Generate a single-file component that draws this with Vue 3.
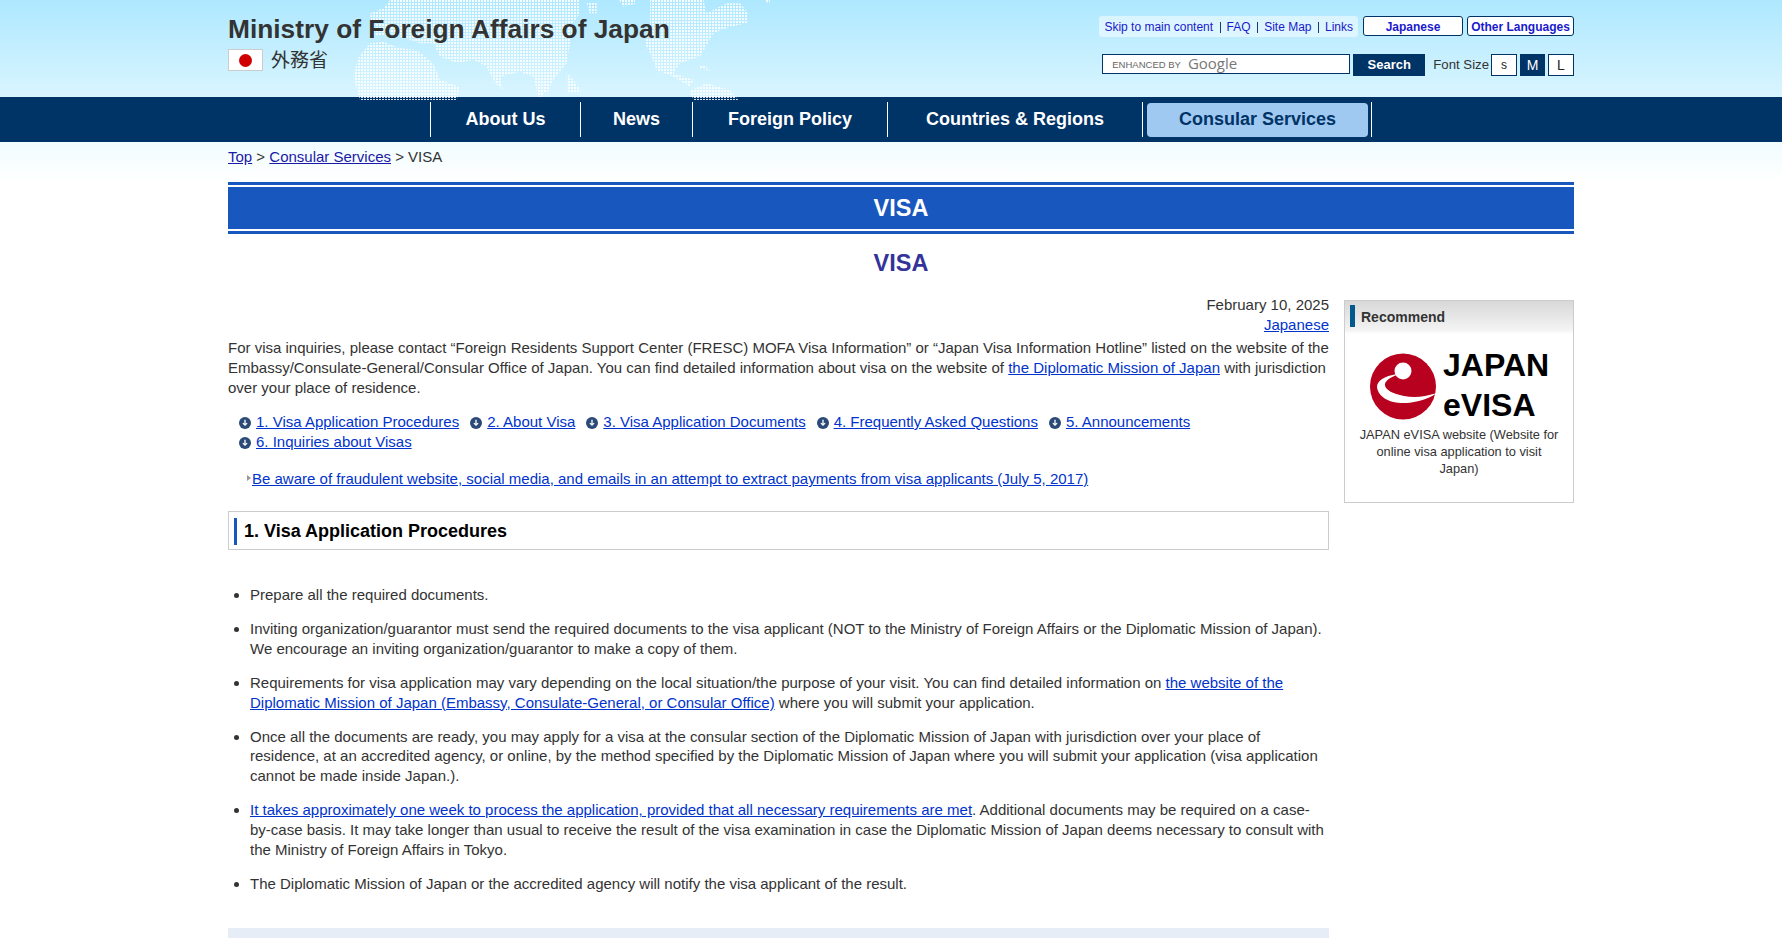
<script setup>
const utilLinks = ['FAQ', 'Site Map', 'Links']
const navItems = ['About Us', 'News', 'Foreign Policy', 'Countries & Regions', 'Consular Services']
const anchors = [
  '1. Visa Application Procedures',
  '2. About Visa',
  '3. Visa Application Documents',
  '4. Frequently Asked Questions',
  '5. Announcements',
  '6. Inquiries about Visas',
]

// rough outlines of the dotted world map, in 3x crop units
const landmasses = [
  '50,190 60,165 90,130 130,125 180,145 230,150 280,190 300,240 360,260 350,300 60,300 40,230',
  '90,40 130,25 150,0 720,0 720,40 700,70 690,130 680,190 640,240 620,280 590,270 580,230 540,215 480,230 490,270 465,250 440,200 400,180 350,190 300,170 280,130 240,130 150,100 100,110',
  '930,0 1090,0 1100,40 1160,10 1200,10 1225,40 1220,70 1170,80 1120,100 1080,170 1020,190 1000,220 1060,240 1050,260 1000,230 950,210 930,160 915,130 930,70',
  '1050,272 1100,250 1170,270 1195,300 1060,300',
  '740,8 770,8 770,40 748,40',
  '838,0 885,0 885,12 850,20',
  '680,220 700,240 722,270 720,280 680,280',
  '590,268 612,268 612,290 592,290',
  '1075,195 1095,195 1110,212 1080,205',
  '1275,0 1290,0 1290,10 1275,10',
]
</script>

<template>
  <div class="page">
    <header class="site-header">
      <svg class="world-map" width="440" height="100" viewBox="0 0 1320 300" aria-hidden="true">
        <defs>
          <pattern id="map-dots" width="9" height="9" patternUnits="userSpaceOnUse">
            <rect width="6" height="6" fill="#fff" />
          </pattern>
          <clipPath id="map-land">
            <polygon v-for="(land, i) in landmasses" :key="i" :points="land" />
          </clipPath>
        </defs>
        <rect width="1320" height="300" fill="url(#map-dots)" clip-path="url(#map-land)" opacity="0.85" />
      </svg>

      <div class="header-inner">
        <div class="brand">
          <div class="brand-name">Ministry of Foreign Affairs of Japan</div>
          <div class="brand-jp">
            <span class="flag"><i /></span>
            <span class="kanji">外務省</span>
          </div>
        </div>

        <div class="tools">
          <div class="tools-row">
            <div class="util">
              <a>Skip to main content</a>
              <a v-for="link in utilLinks" :key="link" class="util-sep">{{ link }}</a>
            </div>
            <a class="lang lang-jp">Japanese</a>
            <a class="lang lang-other">Other Languages</a>
          </div>
          <div class="tools-row search-row">
            <div class="search-box">
              <span class="enhanced">ENHANCED BY</span>
              <span class="google">Google</span>
            </div>
            <button class="search-btn">Search</button>
            <span class="font-label">Font Size</span>
            <span class="size size-s">s</span>
            <span class="size size-on">M</span>
            <span class="size">L</span>
          </div>
        </div>
      </div>
    </header>

    <nav class="main-nav">
      <ul>
        <li v-for="item in navItems" :key="item" :class="{ active: item === 'Consular Services' }">
          <a>{{ item }}</a>
        </li>
      </ul>
    </nav>

    <div class="crumb-wrap">
      <div class="crumbs">
        <a>Top</a> &gt; <a>Consular Services</a> &gt; VISA
      </div>
    </div>

    <div class="content">
      <div class="band"><div class="band-inner">VISA</div></div>
      <h1 class="title">VISA</h1>

      <div class="columns">
        <main class="main-col">
          <div class="date">February 10, 2025</div>
          <div class="date"><a>Japanese</a></div>
          <p class="intro">
            For visa inquiries, please contact “Foreign Residents Support Center (FRESC) MOFA Visa Information” or “Japan Visa Information Hotline” listed on the website of the Embassy/Consulate-General/Consular Office of Japan. You can find detailed information about visa on the website of <a>the Diplomatic Mission of Japan</a> with jurisdiction over your place of residence.
          </p>

          <ul class="anchors">
            <li v-for="a in anchors" :key="a">
              <svg width="12" height="12" viewBox="0 0 12 12" aria-hidden="true">
                <circle cx="6" cy="6" r="6" fill="#2b4a78" />
                <path d="M6 2.8v5.4M3.9 6.1 6 8.2l2.1-2.1" fill="none" stroke="#fff" stroke-width="1.3" />
              </svg>
              <a>{{ a }}</a>
            </li>
          </ul>

          <p class="notice">
            <svg width="4" height="6" viewBox="0 0 4 6" aria-hidden="true"><path d="M0 0l4 3-4 3z" fill="#999" /></svg>
            <a>Be aware of fraudulent website, social media, and emails in an attempt to extract payments from visa applicants (July 5, 2017)</a>
          </p>

          <h2 class="section-head"><span>1. Visa Application Procedures</span></h2>

          <ul class="steps">
            <li>Prepare all the required documents.</li>
            <li>Inviting organization/guarantor must send the required documents to the visa applicant (NOT to the Ministry of Foreign Affairs or the Diplomatic Mission of Japan). We encourage an inviting organization/guarantor to make a copy of them.</li>
            <li>Requirements for visa application may vary depending on the local situation/the purpose of your visit. You can find detailed information on <a>the website of the Diplomatic Mission of Japan (Embassy, Consulate-General, or Consular Office)</a> where you will submit your application.</li>
            <li>Once all the documents are ready, you may apply for a visa at the consular section of the Diplomatic Mission of Japan with jurisdiction over your place of residence, at an accredited agency, or online, by the method specified by the Diplomatic Mission of Japan where you will submit your application (visa application cannot be made inside Japan.).</li>
            <li><a>It takes approximately one week to process the application, provided that all necessary requirements are met</a>. Additional documents may be required on a case-by-case basis. It may take longer than usual to receive the result of the visa examination in case the Diplomatic Mission of Japan deems necessary to consult with the Ministry of Foreign Affairs in Tokyo.</li>
            <li>The Diplomatic Mission of Japan or the accredited agency will notify the visa applicant of the result.</li>
          </ul>

          <div class="next-band" />
        </main>

        <aside class="side">
          <div class="side-head"><span>Recommend</span></div>
          <div class="evisa">
            <svg width="66" height="67" viewBox="0 0 66 67" aria-hidden="true">
              <circle cx="33" cy="33.5" r="33" fill="#b8001f" />
              <circle cx="33" cy="18" r="8.5" fill="#fff" />
              <path d="M27 21C14 23 7 28 7 34C8 45 22 51 36 50C47 49 58 46 67 40C55 44 44 45 34 43C22 41 14 36 15 31C16 27 21 24 27 22Z" fill="#fff" />
            </svg>
            <div class="evisa-word">JAPAN<br />eVISA</div>
          </div>
          <p class="side-cap">JAPAN eVISA website (Website for online visa application to visit Japan)</p>
        </aside>
      </div>
    </div>
  </div>
</template>

<style>
body { margin: 0; background: #fff; }
</style>

<style scoped>
.page {
  height: 938px;
  overflow: hidden;
  font-family: "Liberation Sans", Arial, sans-serif;
  font-size: 15px;
  line-height: 20px;
  color: #333;
}
a { color: #0033cc; text-decoration: underline; cursor: pointer; }

.site-header {
  position: relative;
  height: 97px;
  background: linear-gradient(#aee8ff, #d9f5ff);
}
.world-map { position: absolute; left: 340px; top: 0; }
.header-inner {
  position: relative;
  display: flex;
  justify-content: space-between;
  width: 1346px;
  margin-left: 228px;
}
.brand-name {
  margin-top: 14px;
  font-size: 26.3px;
  line-height: 31px;
  font-weight: 700;
  color: #333;
  white-space: nowrap;
}
.brand-jp { display: flex; align-items: center; gap: 8px; margin-top: 4px; }
.flag {
  display: flex;
  align-items: center;
  justify-content: center;
  box-sizing: border-box;
  width: 35px;
  height: 22px;
  background: #fff;
  border: 1px solid #ccc;
}
.flag i { width: 13px; height: 13px; border-radius: 50%; background: #d00000; }
.kanji {
  margin-top: -2px;
  font-family: "Noto Sans CJK JP", sans-serif;
  font-size: 19px;
  line-height: 22px;
  color: #333;
}

.tools { width: 480px; padding-top: 16px; }
.tools-row { display: flex; justify-content: flex-end; align-items: flex-start; }
.util {
  display: flex;
  box-sizing: border-box;
  height: 21px;
  padding: 1px 5px 0;
  margin-right: 5px;
  background: rgba(255, 255, 255, 0.5);
  border-radius: 3px;
  font-size: 12px;
  line-height: 20px;
}
.util a { color: #1a1acc; text-decoration: none; }
.util-sep { margin-left: 6.5px; padding-left: 7px; background: linear-gradient(#1a3a7a, #1a3a7a) left center / 1px 11px no-repeat; }
.lang {
  box-sizing: border-box;
  height: 20px;
  padding-top: 1px;
  background: #fff;
  border: 1px solid #003366;
  border-radius: 3px;
  font-size: 12px;
  line-height: 18px;
  font-weight: 700;
  color: #1a1acc;
  text-align: center;
  text-decoration: none;
}
.lang-jp { width: 100px; margin-right: 4px; }
.lang-other { width: 107px; white-space: nowrap; }

.search-row { margin-top: 17px; }
.search-box {
  display: flex;
  align-items: center;
  box-sizing: border-box;
  width: 248px;
  height: 20px;
  padding-left: 9px;
  background: #fff;
  border: 1px solid #003366;
}
.enhanced { padding-top: 1px; font-size: 9.5px; color: #666; white-space: nowrap; }
.google { margin: -3px 0 0 7px; font-family: "Open Sans", sans-serif; font-size: 15px; color: #777; }
.search-btn {
  width: 72px;
  height: 22px;
  margin-left: 3px;
  padding: 0;
  background: #003366;
  border: 0;
  font: 700 13px/22px "Liberation Sans", Arial, sans-serif;
  color: #fff;
}
.font-label { margin: 0 2px 0 8px; font-size: 13.2px; line-height: 22px; white-space: nowrap; }
.size {
  box-sizing: border-box;
  width: 26px;
  height: 22px;
  margin-left: 3px;
  background: #fff;
  border: 1px solid #003366;
  font-size: 14px;
  line-height: 21px;
  color: #222;
  text-align: center;
}
.size-s { margin-left: 0; font-size: 12px; }
.size-on { width: 25px; background: #003366; color: #fff; }

.main-nav { height: 45px; background: #003366; }
.main-nav ul {
  display: grid;
  grid-template-columns: 150px 112px 195px 255px 230px;
  width: max-content;
  margin: 0 0 0 430px;
  padding: 5px 0 0;
  list-style: none;
}
.main-nav li {
  height: 35px;
  border-left: 1px solid #fff;
  text-align: center;
  font-size: 18px;
  line-height: 34px;
  font-weight: 700;
}
.main-nav li:last-child { border-right: 1px solid #fff; }
.main-nav a { display: block; color: #fff; text-decoration: none; }
.main-nav .active a {
  margin: 1px 3px 0 4px;
  height: 34px;
  line-height: 32px;
  background: #a0c9f1;
  border-radius: 4px;
  color: #003366;
}

.crumb-wrap {
  height: 40px;
  background: linear-gradient(#f1fcff, #fff);
}
.crumbs { padding: 5px 0 0 228px; }
.crumbs a { color: #1a1aa8; }

.content { width: 1346px; margin-left: 228px; }
.band {
  border-top: 3px solid #1857bd;
  border-bottom: 3px solid #1857bd;
  padding: 2px 0;
}
.band-inner {
  height: 42px;
  background: #1857bd;
  text-align: center;
  font-size: 23.5px;
  line-height: 42px;
  font-weight: 700;
  color: #fff;
}
.title {
  margin: 15px 0 0;
  text-align: center;
  font-size: 23.5px;
  line-height: 28px;
  font-weight: 700;
  color: #333399;
}

.columns { display: flex; gap: 15px; margin-top: 18px; }
.main-col { width: 1101px; flex-shrink: 0; }
.date { text-align: right; }
.intro { margin: 3px 0 0; }

.anchors {
  display: flex;
  flex-wrap: wrap;
  column-gap: 11px;
  margin: 14px 0 0;
  padding: 0 0 0 11px;
  list-style: none;
}
.anchors li { display: flex; align-items: center; gap: 5px; }
.anchors svg { margin-top: 2px; }

.notice { margin: 17px 0 0 19px; }
.notice svg { margin-right: 1px; vertical-align: 3px; }

.section-head {
  margin: 22px 0 0;
  padding: 6px 5px 4px;
  background: #fff;
  border: 1px solid #ccc;
  font-size: 18px;
  line-height: 27px;
  font-weight: 700;
  color: #000;
}
.section-head span { display: block; padding-left: 7px; border-left: 3px solid #1857bd; }

.steps { margin: 35px 0 0; padding: 0 0 0 22px; }
.steps li { margin-bottom: 14.2px; line-height: 19.8px; }
.steps li:last-child { margin-bottom: 0; }

.next-band { height: 60px; margin-top: 34px; background: #e6edf7; }

.side {
  box-sizing: border-box;
  width: 230px;
  height: 203px;
  margin-top: 5px;
  border: 1px solid #ccc;
}
.side-head {
  height: 33px;
  padding: 4px 0 0 5px;
  box-sizing: border-box;
  background: linear-gradient(#d8d8d8, #f4f4f4 90%, #fff);
}
.side-head span {
  display: block;
  height: 22px;
  padding-left: 6px;
  border-left: 5px solid #005a8c;
  font-size: 14px;
  line-height: 25px;
  font-weight: 700;
}
.evisa { display: flex; gap: 7px; margin: 19px 0 0 25px; }
.evisa svg { flex-shrink: 0; }
.evisa-word {
  margin-top: -8px;
  font-size: 32px;
  line-height: 40px;
  font-weight: 700;
  color: #000;
}
.side-cap {
  margin: 1px 12px 0;
  text-align: center;
  font-size: 12.8px;
  line-height: 17px;
}
</style>
